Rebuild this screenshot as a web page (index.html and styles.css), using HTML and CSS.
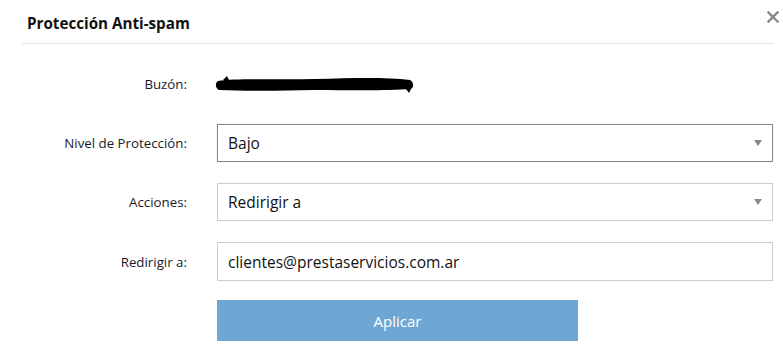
FILE: index.html
```html
<!DOCTYPE html>
<html lang="es">
<head>
    <meta charset="UTF-8">
    <meta name="viewport" content="width=device-width, initial-scale=1.0">
    <title>Protección Anti-spam</title>
    <link rel="stylesheet" href="styles.css">
</head>
<body>
    <div class="modal">
        <div class="modal-header">
            <h4 class="modal-title">Protección Anti-spam</h4>
            <a href="#" class="close" title="Cerrar">
                <svg width="12" height="12" viewBox="0 0 12 12">
                    <path d="M1.5 1.5 L10.5 10.5 M10.5 1.5 L1.5 10.5" stroke="#888" stroke-width="2.4" stroke-linecap="square"/>
                </svg>
            </a>
        </div>
        <form class="modal-body">
            <div class="row">
                <label>Buzón:</label>
                <div class="value">
                    <svg class="redacted" width="200" height="20" viewBox="0 0 200 20">
                        <path d="M3 7 C20 4 60 6 100 5 C140 4 170 3 195 6 C199 8 199 13 196 15 C170 17 130 16 100 16 C60 17 30 17 4 16 C0 14 0 9 3 7 Z" fill="#000"/>
                        <path d="M8 6 L12 2 L14 6 Z" fill="#000"/>
                        <path d="M191 15 L194 19 L196 15 Z" fill="#000"/>
                    </svg>
                </div>
            </div>
            <div class="row">
                <label>Nivel de Protección:</label>
                <div class="select focused">
                    <span>Bajo</span>
                    <i class="caret"></i>
                </div>
            </div>
            <div class="row">
                <label>Acciones:</label>
                <div class="select">
                    <span>Redirigir a</span>
                    <i class="caret"></i>
                </div>
            </div>
            <div class="row">
                <label>Redirigir a:</label>
                <input type="text" class="input" value="clientes@prestaservicios.com.ar">
            </div>
            <div class="row actions">
                <span></span>
                <button type="button" class="btn">Aplicar</button>
            </div>
        </form>
    </div>
</body>
</html>
```

FILE: styles.css
```css
body {
    margin: 0;
    background: #fff;
    font-family: 'Open Sans', 'Noto Sans', sans-serif;
    color: #222;
}

.modal {
    width: 783px;
    height: 354px;
    overflow: hidden;
}

.modal-header {
    display: flex;
    align-items: center;
    justify-content: space-between;
    height: 44px;
    margin: 0 9px 0 22px;
    padding: 3px 0 0 5px;
    border-bottom: 1px solid #e5e5e5;
    box-sizing: border-box;
}

.modal-title {
    margin: 0;
    font-size: 15.2px;
    font-weight: 700;
    color: #111;
}

.close {
    display: block;
    align-self: flex-start;
    margin-top: 8px;
    margin-right: -5px;
    line-height: 0;
}

.modal-body {
    display: flex;
    flex-direction: column;
    gap: 21px;
    padding: 21px 10px 0 0;
}

.row {
    display: grid;
    grid-template-columns: 187px 556px;
    column-gap: 30px;
    align-items: center;
    height: 38px;
}

.row label {
    text-align: right;
    font-size: 13.3px;
    color: #1a1a2a;
}

.value {
    display: flex;
    align-items: center;
}

.redacted {
    display: block;
    margin-left: -2px;
}

.select,
.input {
    box-sizing: border-box;
    height: 38px;
    border: 1px solid #ccc;
    background: #fff;
    font-family: inherit;
    font-size: 15.5px;
    color: #111;
}

.select {
    display: flex;
    align-items: center;
    justify-content: space-between;
    padding: 0 10px;
}

.select.focused {
    border-color: #888;
    box-shadow: 0 0 2px rgba(0, 0, 0, 0.1);
}

.caret {
    width: 0;
    height: 0;
    border-left: 4px solid transparent;
    border-right: 4px solid transparent;
    border-top: 6px solid #888;
}

.input {
    width: 100%;
    height: 39px;
    padding: 0 10px;
    outline: none;
}

.row.actions {
    height: 41px;
    margin-top: -1px;
}

.btn {
    width: 361px;
    height: 41px;
    border: 0;
    background: #6fa7d4;
    color: #fff;
    font-family: inherit;
    font-size: 15px;
    cursor: pointer;
}
```
